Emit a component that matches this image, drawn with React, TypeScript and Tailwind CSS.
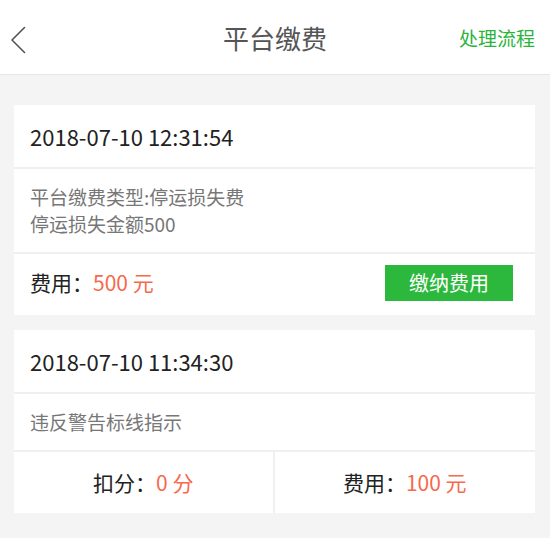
import React from "react";

// ─── Platform fee page ──────────────────────────────────────────────────────

const font = { fontFamily: '"Noto Sans CJK SC", "Noto Sans", sans-serif' };

function Header() {
  return (
    <div className="relative flex h-[75px] items-center justify-center border-b border-[#e6e6e6] bg-white">
      {/* back chevron */}
      <svg className="absolute left-[10px] top-[26px] h-[28px] w-[16px]" viewBox="0 0 16 28" fill="none">
        <path d="M14.5 1.5L2 14l12.5 12.5" stroke="#555" strokeWidth="1.6" strokeLinecap="round" strokeLinejoin="round" />
      </svg>
      <h1 className="text-[26px] text-[#555]">平台缴费</h1>
      <span className="absolute right-[15px] top-[26px] text-[19px] leading-[24px] text-[#2bb33c]">处理流程</span>
    </div>
  );
}

function DateRow({ text }: { text: string }) {
  return (
    <div className="flex h-[62px] items-center px-[16px] text-[22px] text-[#222]">{text}</div>
  );
}

export default function App() {
  return (
    <div style={font} className="min-h-[538px] w-[550px] bg-[#f4f4f4]">
      <Header />

      <div className="flex flex-col gap-[15px] pl-[14px] pr-[15px] pt-[30px]">
        {/* ── Card 1 ── */}
        <div className="flex flex-col bg-white">
          <DateRow text="2018-07-10 12:31:54" />
          <div className="flex h-[85px] flex-col justify-center border-t-2 border-[#f0f0f0] px-[16px] pb-[2px] text-[19px] leading-[27px] text-[#777]">
            <p>平台缴费类型:停运损失费</p>
            <p>停运损失金额500</p>
          </div>
          <div className="flex h-[63px] items-center justify-between border-t-2 border-[#f0f0f0] pb-[4px] pl-[16px] pr-[22px] text-[21px]">
            <p className="text-[#222]">
              费用：<span className="text-[#f7694c]">500 元</span>
            </p>
            <button className="flex h-[36px] w-[128px] items-center justify-center bg-[#2cb83c] text-[20px] text-white">
              缴纳费用
            </button>
          </div>
        </div>

        {/* ── Card 2 ── */}
        <div className="flex flex-col bg-white">
          <DateRow text="2018-07-10 11:34:30" />
          <div className="flex h-[58px] items-center border-t-2 border-[#f0f0f0] px-[16px] text-[19px] text-[#777]">
            违反警告标线指示
          </div>
          <div className="grid h-[63px] grid-cols-2 border-t-2 border-[#f0f0f0] text-[21px] text-[#222]">
            <div className="flex items-center justify-center border-r-2 border-[#f0f0f0]">
              扣分：<span className="text-[#f7694c]">0 分</span>
            </div>
            <div className="flex items-center justify-center">
              费用：<span className="text-[#f7694c]">100 元</span>
            </div>
          </div>
        </div>
      </div>
    </div>
  );
}
